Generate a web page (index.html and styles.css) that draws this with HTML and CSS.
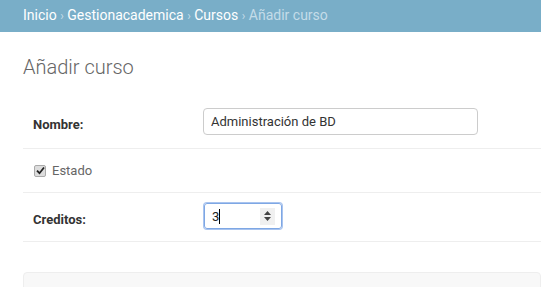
FILE: index.html
```html
<!DOCTYPE html>
<html lang="es">
<head>
    <meta charset="UTF-8">
    <meta name="viewport" content="width=device-width, initial-scale=1.0">
    <title>Añadir curso</title>
    <link rel="stylesheet" href="styles.css">
</head>
<body>

    <div class="breadcrumbs">
        <a href="#">Inicio</a> <span class="sep">›</span>
        <a href="#">Gestionacademica</a> <span class="sep">›</span>
        <a href="#">Cursos</a> <span class="sep">›</span>
        Añadir curso
    </div>

    <div class="content">
        <h1>Añadir curso</h1>

        <form>
            <fieldset class="module">
                <div class="form-row row-name">
                    <label class="required" for="id_nombre">Nombre:</label>
                    <input type="text" class="text-field" id="id_nombre" value="Administración de BD">
                </div>

                <div class="form-row row-check">
                    <span class="checkbox">
                        <svg width="9" height="9" viewBox="0 0 9 9"><path d="M1 4.6 L3.5 7.2 L8 1.5" fill="none" stroke="#222" stroke-width="1.8"/></svg>
                    </span>
                    <span class="vCheckboxLabel">Estado</span>
                </div>

                <div class="form-row row-number">
                    <label class="required" for="id_creditos">Creditos:</label>
                    <div class="number-field">
                        <span class="value">3</span><span class="caret"></span>
                        <span class="spinner">
                            <svg width="9" height="12" viewBox="0 0 9 12"><path d="M4.5 1 L8 5 L1 5 Z M1 7 L8 7 L4.5 11 Z" fill="#444"/></svg>
                        </span>
                    </div>
                </div>
            </fieldset>

            <div class="submit-row"></div>
        </form>
    </div>

</body>
</html>
```

FILE: styles.css
```css
body {
    margin: 0;
    font-family: Roboto, "Liberation Sans", Arial, sans-serif;
    font-size: 14px;
    color: #333;
    background: #fff;
    overflow: hidden;
}
.breadcrumbs {
    background: #79aec8;
    padding: 7px 23px;
    line-height: 17px;
    font-size: 14px;
    color: #c4dce8;
}
.breadcrumbs a {
    color: #fff;
    text-decoration: none;
}
.breadcrumbs .sep {
    font-size: 12px;
}
.content {
    padding: 23px 0 0 23px;
}
h1 {
    margin: 0 0 19px;
    font-size: 20px;
    font-weight: 300;
    line-height: 24px;
    color: #666;
}
fieldset {
    margin: 0;
    padding: 0;
    border: none;
}
.form-row {
    display: flex;
    align-items: center;
    padding: 10px;
    font-size: 13px;
    border-bottom: 1px solid #eee;
}
.row-name {
    padding-bottom: 13px;
}
.row-check {
    height: 23px;
}
.row-number {
    padding-bottom: 12px;
}
label {
    width: 160px;
    padding: 6px 10px 0 0;
    line-height: 1;
}
label.required {
    font-weight: bold;
    color: #333;
}
.text-field {
    box-sizing: border-box;
    width: 275px;
    height: 27px;
    margin: 0;
    padding: 5px 6px 5px 7px;
    border: 1px solid #ccc;
    border-radius: 4px;
    font-family: Roboto, "Liberation Sans", Arial, sans-serif;
    font-size: 13px;
    color: #333;
}
.checkbox {
    display: inline-flex;
    align-items: center;
    justify-content: center;
    box-sizing: border-box;
    width: 12px;
    height: 12px;
    margin: 0 6px 0 1px;
    background: #ddd;
    border: 1px solid #aaa;
    border-radius: 2px;
}
.vCheckboxLabel {
    color: #666;
}
.number-field {
    box-sizing: border-box;
    display: flex;
    align-items: center;
    width: 78px;
    height: 26px;
    margin-left: 1px;
    padding: 0 6px 0 7px;
    border: 1px solid #7ea7e4;
    border-radius: 3px;
    box-shadow: 0 0 0 1px #a9c4ef;
    font-size: 13px;
    color: #222;
}
.caret {
    width: 1px;
    height: 15px;
    background: #000;
}
.spinner {
    display: flex;
    align-items: center;
    justify-content: center;
    width: 15px;
    height: 17px;
    margin-left: auto;
    background: #f0f0f0;
}
.submit-row {
    height: 40px;
    margin-top: 30px;
    background: #f8f8f8;
    border: 1px solid #eee;
    border-radius: 4px;
}
```
